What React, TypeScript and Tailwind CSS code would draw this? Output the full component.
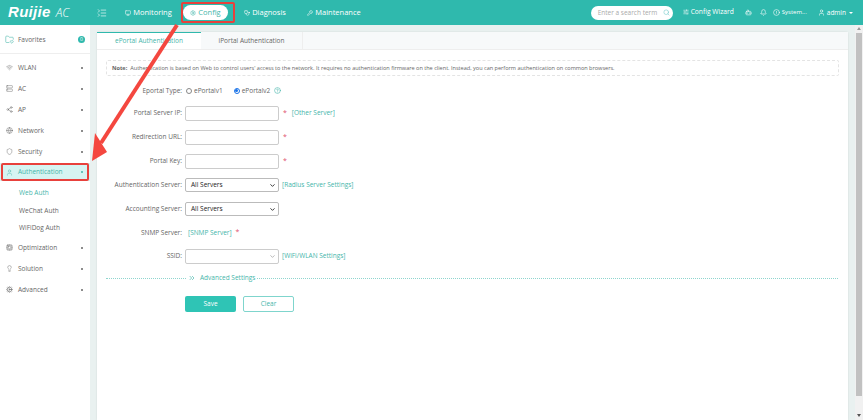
import { AlertCircle, Bell, Bot, ChevronDown, ChevronsRight, CircleHelp, Cog, Cpu, Globe, Lightbulb, ListCollapse, Monitor, Search, Settings, Share2, Shield, SlidersHorizontal, Stethoscope, User, Wifi, Wrench, Server, FolderHeart } from 'lucide-react';
import type { ReactNode } from 'react';

const font = "font-['Open_Sans','Noto_Sans',sans-serif]";

const topTabs = [
  { label: 'Monitoring', icon: Monitor, cls: 'w-[55px] ml-[14px]' },
  { label: 'Config', icon: Settings, active: true, cls: 'w-[45px] ml-[7px]' },
  { label: 'Diagnosis', icon: Stethoscope, cls: 'w-[50px] ml-[12px]' },
  { label: 'Maintenance', icon: Wrench, cls: 'w-[60px] ml-[14px]' },
];

const menuTop = [
  { label: 'WLAN', icon: Wifi },
  { label: 'AC', icon: Server },
  { label: 'AP', icon: Share2 },
  { label: 'Network', icon: Globe },
  { label: 'Security', icon: Shield },
];

const menuBottom = [
  { label: 'Optimization', icon: Cpu },
  { label: 'Solution', icon: Lightbulb },
  { label: 'Advanced', icon: Cog },
];

const Row = ({ label, h = 'h-[24px]', children }: { label: string; h?: string; children: ReactNode }) => (
  <div className={`flex items-center ${h}`}>
    <span className="w-[88px] shrink-0 whitespace-nowrap pr-[3px] text-right text-[6.5px] text-[#666]">{label}</span>
    {children}
  </div>
);

const Input = () => <div className="h-[15px] w-[94px] rounded-[2px] border border-[#ccc] bg-white" />;
const Star = () => <span className="ml-[4px] text-[7px] text-[#e0506e]">*</span>;
const Lnk = ({ children, cls = 'ml-[3px]' }: { children: ReactNode; cls?: string }) => (
  <span className={`${cls} whitespace-nowrap text-[6.5px] text-[#45b5aa]`}>{children}</span>
);

const Sel = () => (
  <div className="flex h-[14px] w-[94px] items-center justify-between rounded-[2px] border border-[#bbb] bg-white pl-[5px] pr-[2px] text-[6.5px] text-[#222]">
    All Servers
    <ChevronDown size={7} strokeWidth={3} className="text-[#222]" />
  </div>
);

export default function App() {
  return (
    <div className={`${font} relative flex h-[420px] w-[863px] flex-col overflow-hidden bg-[#e9f1f0]`}>
      <header className="flex h-[25px] shrink-0 items-center bg-[#2fb9ad] text-white">
        <div className="flex w-[98px] items-baseline pl-[8px]">
          <span className="font-['Liberation_Sans',sans-serif] text-[15px] font-bold italic tracking-[0.3px]">Ruijie</span>
          <span className="ml-[5px] text-[12px] font-light italic">AC</span>
        </div>
        <ListCollapse size={10} strokeWidth={1.5} className="-ml-[1px]" />
        {topTabs.map((t) => {
          const Icon = t.icon;
          return (
            <div key={t.label} className={`flex h-[15px] items-center justify-center gap-[2px] whitespace-nowrap rounded-full text-[7.5px] ${t.cls} ${t.active ? 'bg-white text-[#45b5aa]' : ''}`}>
              <Icon size={6} strokeWidth={2} />
              {t.label}
            </div>
          );
        })}
        <div className="ml-auto flex h-[14px] w-[82px] items-center justify-between rounded-full bg-white pl-[7px] pr-[3px] text-[6.5px] text-[#aaa]">
          Enter a search term
          <Search size={7} className="text-[#7cc]" />
        </div>
        <div className="ml-[10px] flex items-center gap-[2px] whitespace-nowrap text-[6.7px]">
          <SlidersHorizontal size={6} />
          Config Wizard
        </div>
        <Bot size={7} className="ml-[11px]" />
        <Bell size={7} className="ml-[8px]" />
        <div className="ml-[6px] flex items-center gap-[2px] text-[6px]">
          <AlertCircle size={7} />
          System...
        </div>
        <div className="ml-[11px] flex items-center gap-[2px] text-[6.5px]">
          <User size={7} />
          admin
        </div>
        <span className="ml-[3px] mr-[10px] h-0 w-0 border-x-[2px] border-t-[2px] border-x-transparent border-t-white" />
      </header>

      <div className="flex min-h-0 flex-1">
        <aside className="flex w-[90px] shrink-0 flex-col bg-white text-[6.5px] text-[#666]">
          <div className="flex h-[29px] shrink-0 items-center border-b border-[#eee] px-[5px] pt-[1px]">
            <FolderHeart size={9} strokeWidth={1.5} className="text-[#45b5aa]" />
            <span className="ml-[4px]">Favorites</span>
            <span className="ml-auto flex h-[7px] w-[7px] items-center justify-center rounded-full bg-[#2fb9ad] text-[5px] text-white">0</span>
          </div>
          <div className="h-[3px] shrink-0" />
          {menuTop.map((m) => {
            const Icon = m.icon;
            return (
              <div key={m.label} className="flex h-[21px] shrink-0 items-center pl-[6px] pr-[7px]">
                <Icon size={7} strokeWidth={1.5} />
                <span className="ml-[5px]">{m.label}</span>
                <span className="ml-auto h-[2px] w-[2px] rounded-full bg-[#666]" />
              </div>
            );
          })}
          <div className="mt-[1px] flex h-[18px] shrink-0 items-center bg-[#d6f4f2] pl-[6px] pr-[7px] text-[#45b5aa]">
            <User size={7} strokeWidth={1.5} />
            <span className="ml-[5px]">Authentication</span>
            <span className="ml-auto h-[2px] w-[2px] rounded-full bg-[#45b5aa]" />
          </div>
          <div className="flex h-[21px] shrink-0 items-center pl-[19px] pt-[3px] text-[#45b5aa]">Web Auth</div>
          <div className="flex h-[17px] shrink-0 items-center pl-[19px]">WeChat Auth</div>
          <div className="flex h-[17px] shrink-0 items-center pl-[19px]">WiFiDog Auth</div>
          <div className="h-[1px] shrink-0" />
          {menuBottom.map((m) => {
            const Icon = m.icon;
            return (
              <div key={m.label} className="flex h-[21px] shrink-0 items-center pl-[6px] pr-[7px]">
                <Icon size={7} strokeWidth={1.5} />
                <span className="ml-[5px]">{m.label}</span>
                <span className="ml-auto h-[2px] w-[2px] rounded-full bg-[#666]" />
              </div>
            );
          })}
        </aside>

        <main className="ml-[7px] mt-[7px] flex w-[751px] shrink-0 flex-col rounded-t-[2px] bg-white shadow-[0_0_2px_rgba(0,0,0,0.12)]">
          <div className="flex h-[18px] shrink-0 border-b border-[#eee] bg-[#f7f9fa] text-[6.5px]">
            <div className="flex w-[104px] items-center justify-center border-t border-[#2fb9ad] bg-white text-[#45b5aa]">ePortal Authentication</div>
            <div className="flex w-[102px] items-center justify-center border-r border-[#eee] text-[#666]">iPortal Authentication</div>
          </div>
          <div className="mx-[9px] mt-[10px] flex h-[16px] shrink-0 items-center rounded-[2px] border border-dashed border-[#e4e4e4] pl-[5px] text-[5.55px] text-[#666]">
            <b className="mr-[3px]">Note:</b>
            Authentication is based on Web to control users' access to the network. It requires no authentication firmware on the client. Instead, you can perform authentication on common browsers.
          </div>
          <div className="mt-[3px] flex flex-col">
            <Row label="Eportal Type:" h="h-[22px] pt-[1px]">
              <span className="ml-[1px] mr-[2px] h-[6px] w-[6px] rounded-full border border-[#888]" />
              <span className="text-[6.5px] text-[#666]">ePortalv1</span>
              <span className="ml-[11px] mr-[2px] flex h-[6px] w-[6px] items-center justify-center rounded-full border border-[#1a73e8]">
                <span className="h-[3px] w-[3px] rounded-full bg-[#1a73e8]" />
              </span>
              <span className="text-[6.5px] text-[#666]">ePortalv2</span>
              <CircleHelp size={7} className="ml-[4px] text-[#45b5aa]" />
            </Row>
            <Row label="Portal Server IP:"><Input /><Star /><Lnk cls="ml-[5px]">[Other Server]</Lnk></Row>
            <Row label="Redirection URL:"><Input /><Star /></Row>
            <Row label="Portal Key:"><Input /><Star /></Row>
            <Row label="Authentication Server:"><Sel /><Lnk>[Radius Server Settings]</Lnk></Row>
            <Row label="Accounting Server:"><Sel /></Row>
            <Row label="SNMP Server:" h="h-[23px]"><Lnk>[SNMP Server]</Lnk><Star /></Row>
            <Row label="SSID:">
              <div className="flex h-[15px] w-[94px] items-center justify-end rounded-[2px] border border-[#ccc] pr-[2px]">
                <ChevronDown size={7} className="text-[#888]" />
              </div>
              <Lnk>[WiFi/WLAN Settings]</Lnk>
            </Row>
          </div>
          <div className="ml-[9px] mt-[2px] flex h-[16px] w-[732px] shrink-0 items-center">
            <span className="w-[80px] border-t border-dotted border-[#8fd5ce]" />
            <ChevronsRight size={8} className="mx-[2px] text-[#45b5aa]" />
            <span className="mx-[2px] text-[6.5px] text-[#45b5aa]">Advanced Settings</span>
            <span className="flex-1 border-t border-dotted border-[#8fd5ce]" />
          </div>
          <div className="ml-[88px] mt-[10px] flex gap-[7px] text-[6.5px]">
            <div className="flex h-[16px] w-[51px] items-center justify-center rounded-[2px] bg-[#2fc4b5] text-white">Save</div>
            <div className="flex h-[16px] w-[51px] items-center justify-center rounded-[2px] border border-[#7fd5cd] text-[#45b5aa]">Clear</div>
          </div>
        </main>

        <div className="ml-[7px] flex w-[8px] shrink-0 flex-col items-center bg-[#f1f1f1] pt-[2px]">
          <span className="h-0 w-0 border-x-[2px] border-b-[3px] border-x-transparent border-b-[#999]" />
          <div className="mt-[3px] h-[363px] w-[6px] bg-[#c1c1c1]" />
          <span className="mt-auto mb-[3px] h-0 w-0 border-x-[2px] border-t-[3px] border-x-transparent border-t-[#555]" />
        </div>
      </div>

      <div className="absolute left-[181px] top-[2px] h-[21px] w-[54px] rounded-[2px] border-2 border-[#e8413c]" />
      <div className="absolute left-[1px] top-[163px] h-[18px] w-[88px] rounded-[2px] border-2 border-[#e8413c]" />
      <svg className="absolute left-0 top-0" width="863" height="420" fill="none">
        <line x1="177" y1="25" x2="101" y2="143" stroke="#f4473f" strokeWidth="4" />
        <polygon points="92,161 95,133 107,152" fill="#f4473f" />
      </svg>
    </div>
  );
}
